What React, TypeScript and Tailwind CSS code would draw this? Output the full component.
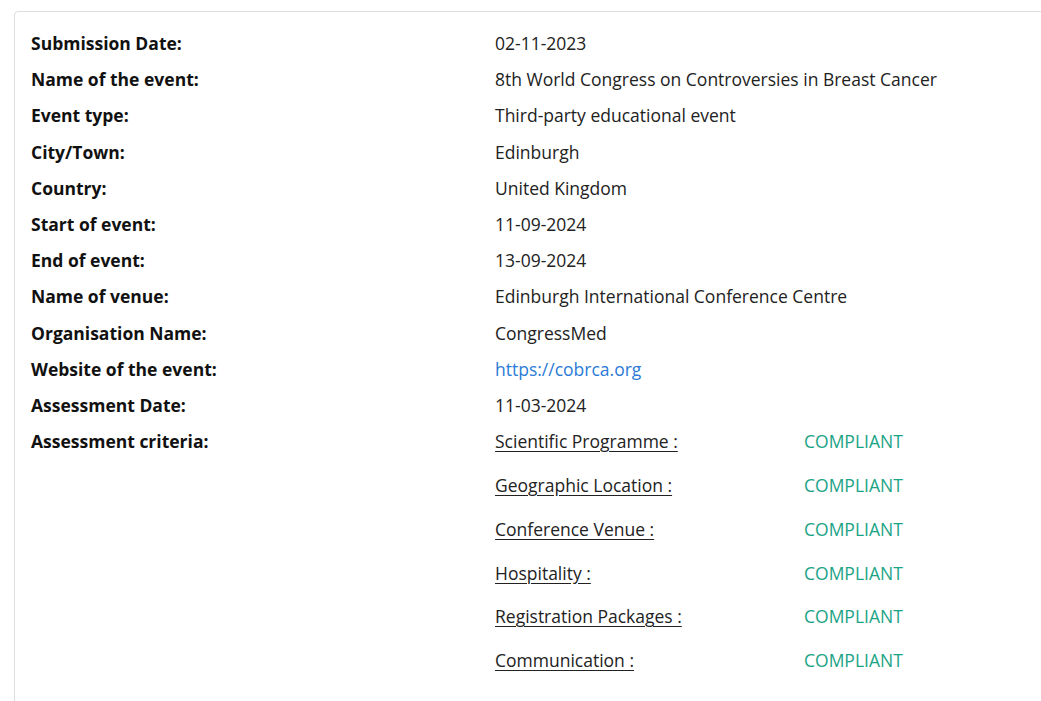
import React from "react";

const rows: [string, string][] = [
  ["Submission Date:", "02-11-2023"],
  ["Name of the event:", "8th World Congress on Controversies in Breast Cancer"],
  ["Event type:", "Third-party educational event"],
  ["City/Town:", "Edinburgh"],
  ["Country:", "United Kingdom"],
  ["Start of event:", "11-09-2024"],
  ["End of event:", "13-09-2024"],
  ["Name of venue:", "Edinburgh International Conference Centre"],
  ["Organisation Name:", "CongressMed"],
];

const criteria = [
  "Scientific Programme :",
  "Geographic Location :",
  "Conference Venue :",
  "Hospitality :",
  "Registration Packages :",
  "Communication :",
];

function Row({ label, children }: { label: string; children: React.ReactNode }) {
  return (
    <div className="flex">
      <div className="w-[464px] shrink-0 font-bold text-[#111] leading-[36.2px]">{label}</div>
      <div className="text-[#222] leading-[36.2px]">{children}</div>
    </div>
  );
}

export default function App() {
  return (
    <div
      className="w-screen h-screen overflow-hidden bg-white text-[17.5px]"
      style={{ fontFamily: '"Open Sans", "Noto Sans", sans-serif' }}
    >
      <div className="pl-[14px] pt-[11px]">
        <div className="w-[1100px] h-[760px] border border-[#dedede] rounded-[4px] pl-[16px] pt-[13px]">
          {rows.map(([l, v]) => (
            <Row key={l} label={l}>
              {v}
            </Row>
          ))}
          <Row label="Website of the event:">
            <a href="#" className="text-[#2b7bd6]">
              https://cobrca.org
            </a>
          </Row>
          <Row label="Assessment Date:">11-03-2024</Row>
          <div className="flex">
            <div className="w-[464px] shrink-0 font-bold text-[#111] leading-[36.2px]">
              Assessment criteria:
            </div>
            <div className="flex flex-col gap-[7.6px]">
              {criteria.map((c) => (
                <div key={c} className="flex leading-[36.2px]">
                  <div className="w-[309px] shrink-0">
                    <span className="underline underline-offset-[3px] text-[#222]">{c}</span>
                  </div>
                  <div className="text-[#1ba386]">COMPLIANT</div>
                </div>
              ))}
            </div>
          </div>
        </div>
      </div>
    </div>
  );
}
